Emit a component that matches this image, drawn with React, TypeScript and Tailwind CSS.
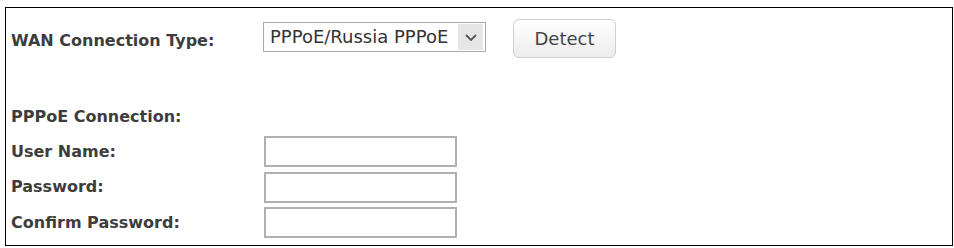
const LABEL = 'font-["DejaVu_Sans",Verdana,sans-serif] font-bold text-[16px] text-[#3d3d3d]'

function Field({ label, type = 'text' }: { label: string; type?: string }) {
  return (
    <div className="flex h-[35.5px] items-center">
      <label className={`w-[258px] pl-[5px] ${LABEL}`}>{label}</label>
      <input
        type={type}
        className="h-[31px] w-[193px] border-2 border-[#b0b0b0] bg-white px-1 text-[16px] outline-none"
      />
    </div>
  )
}

export default function App() {
  return (
    <div className="bg-white pl-[5px] pt-[7px] w-[954px] h-[248px]">
      <div className="w-[948px] h-[239px] border border-black pt-[12px]">
        <div className="flex items-start">
          <label className={`w-[257px] pl-[5px] pt-[9px] ${LABEL}`}>WAN Connection Type:</label>
          <div className="relative mt-[2px] flex h-[30px] w-[223px] items-center border border-[#aaa] bg-white">
            <span className='pl-[6px] font-["DejaVu_Sans",Verdana,sans-serif] text-[18px] text-[#333] leading-none'>
              PPPoE/Russia PPPoE
            </span>
            <span className="absolute right-[2px] top-[1px] flex h-[26px] w-[25px] items-center justify-center bg-[#e6e6e6]">
              <svg width="14" height="9" viewBox="0 0 14 9">
                <path d="M2 2 L7 7 L12 2" fill="none" stroke="#555" strokeWidth="1.8" />
              </svg>
            </span>
          </div>
          <button
            type="button"
            className='ml-[27px] -mt-[1px] h-[39px] w-[103px] rounded-[6px] border border-[#cfcfcf] bg-gradient-to-b from-white to-[#ececec] font-["DejaVu_Sans",Verdana,sans-serif] text-[18px] text-[#444]'
          >
            Detect
          </button>
        </div>

        <div className="mt-[41px] flex h-[35px] items-center">
          <span className={`pl-[5px] ${LABEL}`}>PPPoE Connection:</span>
        </div>
        <Field label="User Name:" />
        <Field label="Password:" type="password" />
        <Field label="Confirm Password:" type="password" />
      </div>
    </div>
  )
}
